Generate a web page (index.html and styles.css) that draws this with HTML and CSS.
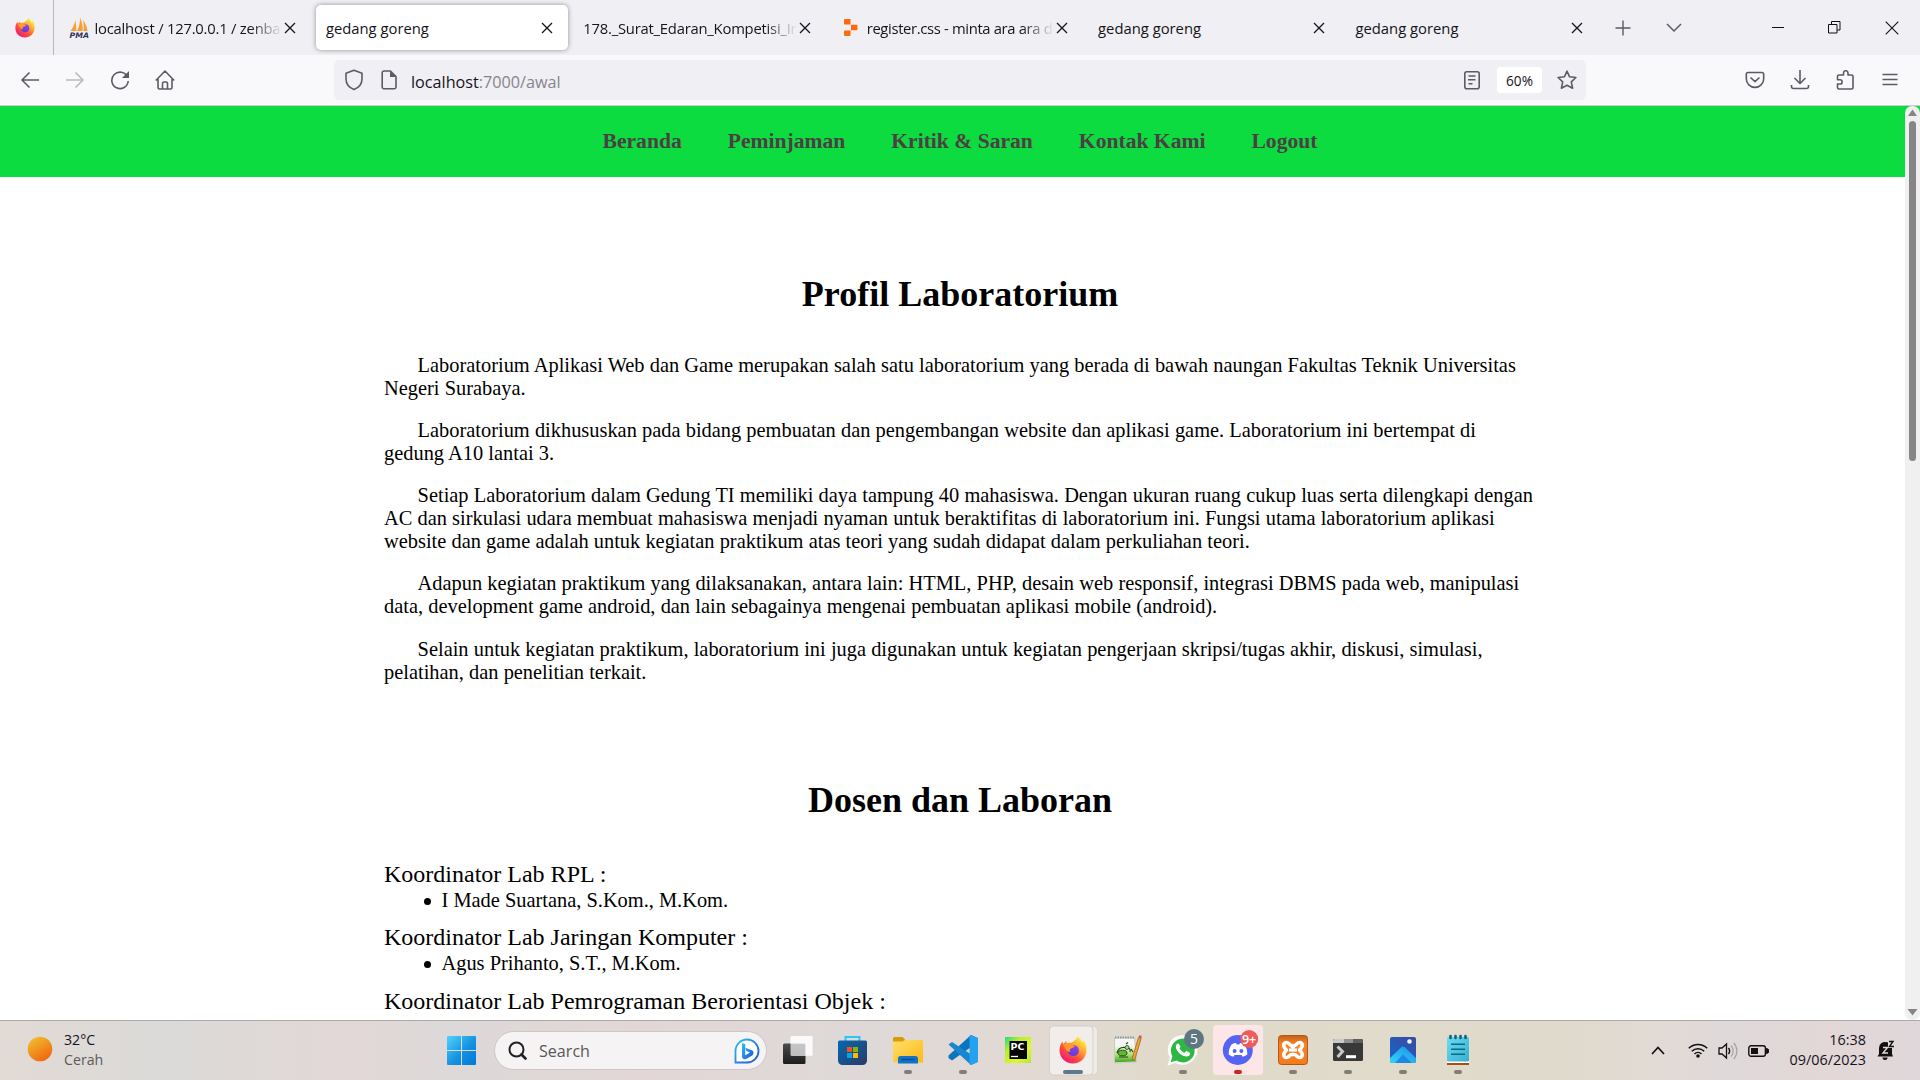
FILE: index.html
```html
<!DOCTYPE html>
<html lang="id">
<head>
<meta charset="utf-8">
<title>gedang goreng</title>
<link rel="stylesheet" href="styles.css">
</head>
<body>
<svg class="defs" width="0" height="0" aria-hidden="true">
  <defs>
    <linearGradient id="fxBody" x1="0.85" y1="0.1" x2="0.2" y2="0.95"><stop offset="0" stop-color="#fff04a"/><stop offset=".3" stop-color="#ffb02e"/><stop offset=".6" stop-color="#ff5a35"/><stop offset="1" stop-color="#f0127a"/></linearGradient>
    <linearGradient id="fxCore" x1="0.8" y1="0" x2="0.3" y2="1"><stop offset="0" stop-color="#9a3df0"/><stop offset="1" stop-color="#5a3fd0"/></linearGradient>
    <linearGradient id="sun" x1="0.2" y1="0" x2="0.8" y2="1"><stop offset="0" stop-color="#efc02c"/><stop offset=".5" stop-color="#f0901f"/><stop offset="1" stop-color="#f06010"/></linearGradient>
    <linearGradient id="win" gradientUnits="userSpaceOnUse" x1="0" y1="0" x2="29" y2="29"><stop offset="0" stop-color="#4fd3ff"/><stop offset=".55" stop-color="#1591e2"/><stop offset="1" stop-color="#0078d8"/></linearGradient>
    <linearGradient id="bing" x1="0" y1="0" x2="1" y2="1"><stop offset="0" stop-color="#1fc4f4"/><stop offset=".5" stop-color="#2a86ea"/><stop offset="1" stop-color="#2350cf"/></linearGradient>
    <linearGradient id="store" x1="0" y1="0" x2="1" y2="1"><stop offset="0" stop-color="#0668b4"/><stop offset="1" stop-color="#2a3a63"/></linearGradient>
    <linearGradient id="folder" x1="0" y1="0" x2="1" y2="1"><stop offset="0" stop-color="#ffdf6a"/><stop offset="1" stop-color="#ffb915"/></linearGradient>
    <linearGradient id="pyc" x1="0" y1="0" x2="1" y2="1"><stop offset="0" stop-color="#1fd88a"/><stop offset=".3" stop-color="#b8ee2c"/><stop offset=".7" stop-color="#e0f52a"/><stop offset="1" stop-color="#a8ea3a"/></linearGradient>
    <linearGradient id="dark" x1="0" y1="0" x2="0" y2="1"><stop offset="0" stop-color="#4a4a4a"/><stop offset="1" stop-color="#1d1d1d"/></linearGradient>
    <linearGradient id="photoSky" x1="0" y1="1" x2="1" y2="0"><stop offset="0" stop-color="#1566c8"/><stop offset="1" stop-color="#3b4aa0"/></linearGradient>
    <linearGradient id="photoHill" x1="0" y1="1" x2="1" y2="0"><stop offset="0" stop-color="#35d4fb"/><stop offset="1" stop-color="#1b8ee8"/></linearGradient>
    <linearGradient id="note" x1="0" y1="0" x2="1" y2="1"><stop offset="0" stop-color="#6bdcf2"/><stop offset="1" stop-color="#37aed2"/></linearGradient>
    <linearGradient id="npGreen" x1="0" y1="0" x2="0" y2="1"><stop offset="0" stop-color="#f4f7f0"/><stop offset=".5" stop-color="#b5e283"/><stop offset="1" stop-color="#3fa51c"/></linearGradient>
    <linearGradient id="xampp" x1="0" y1="0" x2="0" y2="1"><stop offset="0" stop-color="#c4611c"/><stop offset=".3" stop-color="#f98426"/><stop offset="1" stop-color="#f27a1f"/></linearGradient>
    <symbol id="firefox" viewBox="0 0 28 29">
      <path d="M19 1c1 2 3 3.500 4.500 6l1-2c2 3 3 6 3 10 0 7.700-6 13.500-13.500 13.500S.5 22.500.5 15.500C.5 11 2 8.500 3.500 6.500L4 9l3.500-3v2.500c1.500-.8 3-.9 4.500-.7C14 7 17 5 19 1z" fill="url(#fxBody)"/>
      <circle cx="14.300" cy="15.500" r="5.600" fill="url(#fxCore)"/>
      <path d="M4 10c2-1.500 5-1.800 7.500-.8 1.500.7 3 1.500 4.500 1.800-1 1.800-3 2-4.500 2.700-1 .6-.9 2-.2 3.300-2.500 0-3.800-1.500-5-3.500z" fill="#ff9a2a"/>
    </symbol>
    <symbol id="close" viewBox="0 0 12 12"><path d="M1 1l10 10M11 1L1 11" fill="none" stroke="#15141a" stroke-width="1.300"/></symbol>
  </defs>
</svg>

<header class="tabstrip">
  <div class="pinned"><svg width="20" height="21"><use href="#firefox"/></svg></div>
  <div class="tab">
    <svg class="favicon" width="22" height="24" viewBox="0 0 22 24"><path d="M1.500 15C4 12 5.500 8 6.500 4l1 11zM8 15C10.500 11 11 6 11 1.500c2 4 3 9 2.700 13.500zM14.300 15c.7-3 .5-7-.3-11 2.500 3 4 7 4.500 11z" fill="#f6a036"/><text x="0.500" y="21.500" class="pma" textLength="19.500" lengthAdjust="spacingAndGlyphs">PMA</text></svg>
    <span class="title fade snug">localhost / 127.0.0.1 / zenbase</span><svg class="x" width="12" height="12"><use href="#close"/></svg>
  </div>
  <div class="tab active"><span class="title">gedang goreng</span><svg class="x" width="12" height="12"><use href="#close"/></svg></div>
  <div class="tab"><span class="title fade snug">178._Surat_Edaran_Kompetisi_Inovasi</span><svg class="x" width="12" height="12"><use href="#close"/></svg></div>
  <div class="tab">
    <svg class="favicon replit" width="14" height="17" viewBox="0 0 14 17"><path d="M1 0h5.500v5.500H1a1 1 0 0 1-1-1V1a1 1 0 0 1 1-1zM7 5.700h5.500a1 1 0 0 1 1 1v3.500a1 1 0 0 1-1 1H7zM1 11.500h5.500v4.500a1 1 0 0 1-1 1H1a1 1 0 0 1-1-1v-3.500a1 1 0 0 1 1-1z" fill="#fc6a0c"/></svg>
    <span class="title fade tight">register.css - minta ara ara dong</span><svg class="x" width="12" height="12"><use href="#close"/></svg>
  </div>
  <div class="tab"><span class="title">gedang goreng</span><svg class="x" width="12" height="12"><use href="#close"/></svg></div>
  <div class="tab"><span class="title">gedang goreng</span><svg class="x" width="12" height="12"><use href="#close"/></svg></div>
  <div class="strip-tools">
    <svg width="16" height="16" viewBox="0 0 16 16"><path d="M8 .5v15M.5 8h15" stroke="#5b5b66" stroke-width="1.400"/></svg>
    <svg width="16" height="10" viewBox="0 0 16 10"><path d="M1 1l7 7 7-7" fill="none" stroke="#5b5b66" stroke-width="1.500"/></svg>
  </div>
  <div class="win-buttons">
    <svg width="12" height="12" viewBox="0 0 12 12"><path d="M0 5.500h12" stroke="#111" stroke-width="1"/></svg>
    <svg width="13" height="13" viewBox="0 0 13 13"><path d="M.5 3.500h8.500v8.500H.5zM3.500 3.500v-3h8.500v8.500h-3" fill="none" stroke="#111"/></svg>
    <svg width="14" height="14" viewBox="0 0 14 14"><path d="M.7.700l12.600 12.600M13.300.700L.7 13.300" stroke="#111" stroke-width="1.100"/></svg>
  </div>
</header>

<div class="toolbar">
  <div class="nav-buttons">
    <svg width="20" height="20" viewBox="0 0 20 20"><path d="M19 10H2M9.500 2.500L2 10l7.500 7.500" class="ln"/></svg>
    <svg class="dim" width="20" height="20" viewBox="0 0 20 20"><path d="M1 10h17M10.500 2.500L18 10l-7.500 7.500" class="ln"/></svg>
    <svg width="20" height="20" viewBox="0 0 20 20"><path d="M17.500 7A8.200 8.200 0 1 0 18.200 11" class="ln"/><path d="M19 1v7h-7z" fill="#5b5b66"/></svg>
    <svg width="20" height="20" viewBox="0 0 20 20"><path d="M.8 10.500L10 1l9.200 9.500M3 9v8.500a1.500 1.500 0 0 0 1.500 1.500h11a1.500 1.500 0 0 0 1.500-1.500V9M7.500 19v-5.500a1.500 1.500 0 0 1 1.500-1.500h2a1.500 1.500 0 0 1 1.500 1.500V19" class="ln"/></svg>
  </div>
  <div class="urlbar">
    <svg width="20" height="22" viewBox="0 0 20 22"><path d="M10 1.300l8 3v5.500c0 5-3.500 9-8 10.800-4.500-1.800-8-5.800-8-10.800V4.300z" class="ln"/></svg>
    <svg class="doc" width="16" height="20" viewBox="0 0 16 20"><path d="M3 1h6.500L15 6.500V17a1.700 1.700 0 0 1-1.700 1.700H3A1.700 1.700 0 0 1 1.200 17V2.700A1.700 1.700 0 0 1 3 1z" class="ln"/><path d="M9 1v6h6z" fill="#5b5b66"/></svg>
    <span class="url">localhost<span class="path">:7000/awal</span></span>
    <svg class="reader" width="16" height="19" viewBox="0 0 16 19"><rect x=".8" y=".8" width="14.400" height="17" rx="2" class="ln"/><path d="M4.500 5h7M4 8.800h7.500M4.500 12.800h4" class="ln"/></svg>
    <span class="zoom">60%</span>
    <svg width="20" height="20" viewBox="0 0 20 20"><path d="M10 1.200l2.600 5.600 6.300.7-4.600 4.300 1.300 6.400L10 15.200l-5.600 3 1.300-6.400L1.100 7.500l6.300-.7z" class="ln"/></svg>
  </div>
  <div class="ext-buttons">
    <svg width="20" height="20" viewBox="0 0 20 20"><path d="M3 2.500h14a1.700 1.700 0 0 1 1.700 1.700v4.500a8.700 8.700 0 0 1-17.400 0V4.200A1.700 1.700 0 0 1 3 2.500zM5.500 7.500l4.500 4.200 4.500-4.200" class="ln"/></svg>
    <svg width="20" height="20" viewBox="0 0 20 20"><path d="M10 0v13.500M4.500 8l5.500 5.500L15.500 8M1.500 15v1.500a2 2 0 0 0 2 2h13a2 2 0 0 0 2-2V15" class="ln"/></svg>
    <svg width="20" height="20" viewBox="0 0 20 20"><path d="M2.500 6.500a1.500 1.500 0 0 1 1.500-1.500H8.500V3a2 2 0 0 1 4.500 0v2H16.500a1.500 1.500 0 0 1 1.500 1.500v11A1.500 1.500 0 0 1 16.500 19H4A1.500 1.500 0 0 1 2.500 17.500v-3.500h2.500a2 2 0 0 0 0-4.200H2.500z" class="ln"/></svg>
    <svg width="20" height="20" viewBox="0 0 20 20"><path d="M2.500 4.500h15M2.500 9.500h15M2.500 14.500h15" class="ln"/></svg>
  </div>
</div>

<main class="viewport">
  <nav class="menu">
    <a>Beranda</a><a>Peminjaman</a><a>Kritik &amp; Saran</a><a>Kontak Kami</a><a>Logout</a>
  </nav>
  <section class="profile">
    <h1>Profil Laboratorium</h1>
    <p>Laboratorium Aplikasi Web dan Game merupakan salah satu laboratorium yang berada di bawah naungan Fakultas Teknik Universitas Negeri Surabaya.</p>
    <p>Laboratorium dikhususkan pada bidang pembuatan dan pengembangan website dan aplikasi game. Laboratorium ini bertempat di gedung A10 lantai 3.</p>
    <p>Setiap Laboratorium dalam Gedung TI memiliki daya tampung 40 mahasiswa. Dengan ukuran ruang cukup luas serta dilengkapi dengan AC dan sirkulasi udara membuat mahasiswa menjadi nyaman untuk beraktifitas di laboratorium ini. Fungsi utama laboratorium aplikasi website dan game adalah untuk kegiatan praktikum atas teori yang sudah didapat dalam perkuliahan teori.</p>
    <p>Adapun kegiatan praktikum yang dilaksanakan, antara lain: HTML, PHP, desain web responsif, integrasi DBMS pada web, manipulasi data, development game android, dan lain sebagainya mengenai pembuatan aplikasi mobile (android).</p>
    <p>Selain untuk kegiatan praktikum, laboratorium ini juga digunakan untuk kegiatan pengerjaan skripsi/tugas akhir, diskusi, simulasi, pelatihan, dan penelitian terkait.</p>
  </section>
  <section class="staff">
    <h1>Dosen dan Laboran</h1>
    <div class="role">Koordinator Lab RPL :</div>
    <ul><li>I Made Suartana, S.Kom., M.Kom.</li></ul>
    <div class="role">Koordinator Lab Jaringan Komputer :</div>
    <ul><li>Agus Prihanto, S.T., M.Kom.</li></ul>
    <div class="role">Koordinator Lab Pemrograman Berorientasi Objek :</div>
  </section>
  <div class="scrollbar">
    <svg width="15" height="15" viewBox="0 0 15 15"><path d="M7.500 3.500l4.500 6.500H3z" fill="#858585"/></svg>
    <div class="thumb"></div>
    <svg class="down" width="15" height="15" viewBox="0 0 15 15"><path d="M2.500 4h10l-5 6.500z" fill="#858585"/></svg>
  </div>
</main>

<footer class="taskbar">
  <div class="weather">
    <svg width="26" height="26" viewBox="0 0 26 26"><circle cx="13" cy="13" r="12.300" fill="url(#sun)"/></svg>
    <div class="lines"><span>32°C</span><span class="muted">Cerah</span></div>
  </div>
  <svg class="start" width="29" height="29" viewBox="0 0 29 29"><path d="M1 0h13v14H0V1a1 1 0 0 1 1-1zM15 0h13a1 1 0 0 1 1 1v13H15zM0 15h14v14H1a1 1 0 0 1-1-1zM15 15h14v13a1 1 0 0 1-1 1H15z" fill="url(#win)"/></svg>
  <div class="search">
    <svg width="19" height="20" viewBox="0 0 19 20"><circle cx="8.500" cy="8.500" r="7" fill="none" stroke="#222" stroke-width="2"/><path d="M13.500 13.500l4 4" stroke="#222" stroke-width="2.600" stroke-linecap="round"/></svg>
    <span>Search</span>
    <svg width="26" height="26" viewBox="0 0 26 26"><path d="M1.500 24.500V13A11.500 11.500 0 1 1 13 24.500z" fill="#fff" stroke="url(#bing)" stroke-width="1.800"/><path d="M8 5l3.200 1.200v11L16 14.500l-3.500-1.600-1.300-3.200L18 12.200c2 1 2 4 .2 5.300L12 21c-1.800.8-4-.3-4-2.500z" fill="url(#bing)"/></svg>
  </div>
  <div class="apps">
    <div class="app"><svg viewBox="0 0 55 60"><rect x="13" y="23.500" width="22.500" height="20.500" rx="1.500" fill="url(#dark)"/><rect x="20.500" y="16" width="22" height="20" rx="1.500" fill="#f7f7f7" opacity=".72"/><path d="M22 16h20.500v19.500h-7V23.500h-15V17.500a1.500 1.500 0 0 1 1.500-1.500z" fill="#fff" opacity=".7"/></svg></div>
    <div class="app"><svg viewBox="0 0 55 60"><path d="M20.500 22v-5h14v5" fill="none" stroke="#2bc5f7" stroke-width="2"/><path d="M13 22a1.500 1.500 0 0 1 1.500-1.500h26A1.500 1.500 0 0 1 42 22v18.500a4.500 4.500 0 0 1-4.500 4.500h-20a4.500 4.500 0 0 1-4.500-4.500z" fill="url(#store)"/><path d="M22 27h5v5h-5z" fill="#f25022"/><path d="M28 27h5v5h-5z" fill="#7fba00"/><path d="M22 33h5v5h-5z" fill="#00a4ef"/><path d="M28 33h5v5h-5z" fill="#ffb900"/></svg></div>
    <div class="app run"><svg viewBox="0 0 55 60"><path d="M13 18.500a1.500 1.500 0 0 1 1.500-1.500h8l3 3-2 3.500H13z" fill="#d99a08"/><path d="M13 21.500h9.500l2.500-1.500h16.500a1.500 1.500 0 0 1 1.500 1.500v21H14.500a1.500 1.500 0 0 1-1.500-1.500z" fill="url(#folder)"/><path d="M18 43.500V38.500a2.500 2.500 0 0 1 2.500-2.500h15a2.500 2.500 0 0 1 2.500 2.500v5z" fill="#1173c4"/><path d="M21.500 39.500h13" stroke="#0a4c90" stroke-width="1.400"/></svg></div>
    <div class="app run"><svg viewBox="0 0 55 60"><path d="M36 15l6.500 3v4.500L17 40.500l-3.500-2.500v-2.500z" fill="#0a74bd"/><path d="M13.500 24.500L17 22l25.500 16.500V42L36 45z" fill="#1a86cf"/><path d="M36 15l7 3v24l-7 3-1.500-.7V15.700z" fill="#24a2ef"/></svg></div>
    <div class="app"><svg viewBox="0 0 55 60"><rect x="15" y="17" width="26" height="26" fill="url(#pyc)"/><rect x="19.500" y="21" width="17.500" height="18" fill="#050505"/><text x="20.500" y="30" class="pc">PC</text><path d="M21 36.500h7" stroke="#fff" stroke-width="1.300"/></svg></div>
    <div class="app run current"><svg viewBox="0 0 55 60"><rect x="8" y="6.500" width="44.500" height="48" rx="4" fill="#efece8" stroke="#d5d1cb" stroke-width=".8"/><rect x="4.500" y="6" width="43.500" height="49" rx="4" fill="#f0edeb" stroke="#cfcac5" stroke-width=".8"/><svg x="14" y="15" width="28" height="29"><use href="#firefox"/></svg></svg></div>
    <div class="app"><svg viewBox="0 0 55 60"><path d="M14.500 18h20l2 24-22 1z" fill="#f6f7f4" stroke="#b9bdb4" stroke-width=".7"/><path d="M15 17.500h19" stroke="#8b9a9f" stroke-width="1.800" stroke-dasharray="1.500 1"/><path d="M15 26h20l1 15.500-21 .8z" fill="url(#npGreen)"/><path d="M17 33c1-4 4-6 8-5.500 4-.5 6 2 5 4.500M19 37h9M26 24l2-1.500M31 29l2 3" fill="none" stroke="#24451c" stroke-width="1.200"/><ellipse cx="22.500" cy="33" rx="4.500" ry="2.800" fill="#5fbb2a" stroke="#1f3d18" stroke-width=".9"/><circle cx="27" cy="27.500" r="2" fill="#a8dd80" stroke="#1f3d18" stroke-width=".8"/><path d="M38.500 17.500l2.700.8-6 20-2.500 2.500-.2-3.500z" fill="#f3a32f" stroke="#915a1b" stroke-width=".7"/><path d="M38.700 17l.6-1.700 2.400.8-.5 2.200z" fill="#cf4f55"/></svg></div>
    <div class="app run"><svg viewBox="0 0 55 60"><path d="M12.500 45.500l2.300-8A14.800 14.800 0 1 1 20.500 43z" fill="#fff"/><path d="M15.700 42.300l1.700-6A11.900 11.900 0 1 1 21.500 40.600z" fill="#2db843"/><path d="M23.500 23.500c-1-.3-2 .6-2.500 2-.7 3 2 7 5 9 2.500 1.800 6 2.800 8 1.200 1.200-1 1.300-2.500 1-3l-3.500-1.700c-.8-.1-1.200 1.500-2 1.700-2-.5-4.500-3-5-4.500.3-.7 1-1 1-1.700z" fill="#fff"/><circle cx="39" cy="19" r="10" fill="#5e7681"/><text x="39" y="24.200" text-anchor="middle" class="badge">5</text></svg></div>
    <div class="app run alert"><svg viewBox="0 0 55 60"><rect x="3" y="5" width="50" height="50" rx="4" fill="#fde6e8"/><circle cx="27.800" cy="30" r="15" fill="#5664f2"/><path d="M21.500 24.500c2-1 3.500-1.300 4.500-1.400l.7 1.400h2.600l.7-1.400c1.500.1 3 .5 4.500 1.400 2 3 3 6.500 2.800 10-1.600 1.200-3.200 2-4.800 2.300l-1-1.800h-7l-1 1.800c-1.600-.3-3.200-1.100-4.800-2.300-.2-3.500.8-7 2.800-10z" fill="#fff"/><circle cx="24.600" cy="31" r="2" fill="#5664f2"/><circle cx="31.400" cy="31" r="2" fill="#5664f2"/><circle cx="39.200" cy="19" r="9" fill="#ef5a5a"/><text x="39.100" y="23.500" text-anchor="middle" class="badge small">9+</text></svg></div>
    <div class="app run"><svg viewBox="0 0 55 60"><rect x="13.500" y="15.500" width="29" height="29" rx="3" fill="url(#xampp)" stroke="#b4560f"/><path d="M23 23c-3-1.500-5 1-4 3.500.5 1.500 1.500 2.500 2.500 3.500-1 1-2 2-2.500 3.500-1 2.500 1 5 4 3.500 1.500-.8 2-2.500 3.500-2.500h3c1.500 0 2 1.700 3.500 2.500 3 1.500 5-1 4-3.500-.5-1.500-1.500-2.500-2.500-3.500 1-1 2-2 2.500-3.500 1-2.500-1-5-4-3.500-1.500.8-2 2.500-3.500 2.500l-1.500 2-1.500-2c-1.500 0-2-1.700-3.500-2.500z" fill="none" stroke="#fff" stroke-width="3.600" stroke-linejoin="round"/><path d="M24 30h8" stroke="#fff" stroke-width="3.200"/></svg></div>
    <div class="app run"><svg viewBox="0 0 55 60"><rect x="13" y="19" width="30" height="22" rx="1.500" fill="#383838"/><path d="M14.500 19H24v4H13v-2.500a1.500 1.500 0 0 1 1.500-1.500z" fill="#c9c9c9"/><path d="M24 19h9v4h-9z" fill="#929292"/><path d="M33 19h8.500a1.500 1.500 0 0 1 1.500 1.500V23H33z" fill="#5f5f5f"/><path d="M17.500 26.500l5 5-5 5.500" fill="none" stroke="#c8c8c8" stroke-width="3"/><path d="M26 36.700h10" stroke="#fff" stroke-width="3"/></svg></div>
    <div class="app run"><svg viewBox="0 0 55 60"><rect x="15" y="17" width="26" height="26" rx="2" fill="url(#photoSky)"/><path d="M15 38l11-10.500q2-1.800 4 0L41 38v3a2 2 0 0 1-2 2H17a2 2 0 0 1-2-2z" fill="url(#photoHill)"/><path d="M20 43l8-8.500 9 8.500z" fill="#1a7be0" opacity=".8"/><circle cx="34.500" cy="21.500" r="2.300" fill="#f2f6ff"/></svg></div>
    <div class="app run"><svg viewBox="0 0 55 60"><path d="M17 40.500h22v4.500H17z" fill="#a5500e"/><path d="M17 41h22v2H17z" fill="#fff"/><rect x="17" y="17" width="22" height="24.500" rx="1.500" fill="url(#note)"/><path d="M21 24.200h14M21 29.200h14M21 34.200h14" stroke="#0a6b85" stroke-width="1.600"/><path d="M20.500 16v2M25.500 16v2M30.500 16v2M35.500 16v2" stroke="#12617a" stroke-width="2.600" stroke-linecap="round"/></svg></div>
  </div>
  <div class="tray">
    <svg width="14" height="9" viewBox="0 0 14 9"><path d="M1 8l6-6.500L13 8" fill="none" stroke="#111" stroke-width="1.700"/></svg>
    <svg class="wifi" width="20" height="16" viewBox="0 0 20 16"><path d="M.8 6.300a13 13 0 0 1 18.400 0M3.800 9.300a9 9 0 0 1 12.400 0M6.500 12a5 5 0 0 1 7 0" fill="none" stroke="#111" stroke-width="1.500"/><circle cx="10" cy="14" r="1.800" fill="#111"/></svg>
    <svg class="vol" width="20" height="18" viewBox="0 0 20 18"><path d="M1 6h3l4.500-4v14L4 12H1z" fill="none" stroke="#111" stroke-width="1.300"/><path d="M10.500 6a5 5 0 0 1 0 6" fill="none" stroke="#111" stroke-width="1.400"/><path d="M13 3.500a8 8 0 0 1 0 11M15.800 1a12 12 0 0 1 0 16" fill="none" stroke="#a9a4a2" stroke-width="1.200"/></svg>
    <svg class="bat" width="21" height="12" viewBox="0 0 21 12"><rect x=".8" y=".8" width="16.600" height="10.400" rx="2.200" fill="none" stroke="#111" stroke-width="1.400"/><rect x="3" y="3" width="7" height="6" fill="#111"/><path d="M18.300 3.500a2.300 2.300 0 0 1 0 5z" fill="#111" stroke="#111"/></svg>
    <div class="clock"><span>16:38</span><span>09/06/2023</span></div>
    <svg class="bell" width="18" height="21" viewBox="0 0 18 21"><path d="M2 14V8a6 6 0 0 1 8-5.700h5V14l1 2.500H.5z" fill="#111"/><path d="M5.500 17.500h5a2.500 2.500 0 0 1-5 0z" fill="#111"/><path d="M11 0h7v8h-7z" fill="#e2d8d7"/><path d="M6 7.500h4.500L6 13h5" fill="none" stroke="#e2d8d7" stroke-width="1.400"/><path d="M12 1.500h4L12.500 6.500h4.500" fill="none" stroke="#111" stroke-width="1.400"/></svg>
  </div>
</footer>
</body>
</html>
```
FILE: styles.css
```css
* { box-sizing: border-box; }

body {
  margin: 0;
  width: 1920px;
  height: 1080px;
  display: flex;
  flex-direction: column;
  overflow: hidden;
  background: #fff;
  font-family: "Open Sans", "Noto Sans", sans-serif;
  color: #15141a;
}

svg { display: block; flex: none; }
.defs { position: absolute; }

/* Tab strip */
.tabstrip {
  height: 55px;
  flex: none;
  display: flex;
  background: #f0eff4;
}
.pinned {
  width: 54px;
  flex: none;
  padding: 17px 0 0 15px;
  border-right: 1px solid #b9b8be;
}
.tab {
  width: 252.400px;
  height: 45px;
  margin: 5px 2.500px 0;
  flex: none;
  display: flex;
  align-items: center;
  padding: 0 15px 0 10px;
  border-radius: 5px;
  font-size: 14.800px;
}
.pinned + .tab { margin-left: 4.500px; }
.tab.active { background: #fff; box-shadow: 0 0 5px rgba(0, 0, 0, .4); }
.favicon { margin-right: 4px; }
.replit { margin: 0 9px 0 3px; }
.title { flex: 1; min-width: 0; overflow: hidden; white-space: nowrap; line-height: 24px; padding-top: 1px; }
.fade { -webkit-mask-image: linear-gradient(to left, transparent, #000 32px); mask-image: linear-gradient(to left, transparent, #000 32px); }
.snug { letter-spacing: -.22px; }
.tight { letter-spacing: -.34px; }
.x { margin-left: 2px; }
.pma { font: italic bold 7.500px "DejaVu Sans", sans-serif; fill: #30335f; }
.strip-tools { display: flex; align-items: center; gap: 35px; margin-left: 15px; }
.win-buttons { display: flex; align-items: center; gap: 44px; margin-left: auto; padding-right: 21px; }

/* Navigation toolbar */
.toolbar {
  height: 51px;
  flex: none;
  display: flex;
  align-items: center;
  background: #f9f9fb;
  border-bottom: 1px solid #ccccd2;
}
.ln { fill: none; stroke: #5b5b66; stroke-width: 1.600; stroke-linejoin: round; }
.dim { opacity: .4; }
.nav-buttons { width: 334px; display: flex; gap: 25px; padding-left: 20px; }
.urlbar {
  width: 1252px;
  height: 40px;
  display: flex;
  align-items: center;
  padding: 0 9px 0 10px;
  background: #f0eff4;
  border-radius: 5px;
}
.doc { margin: 0 14px 0 17px; }
.url { flex: 1; font-size: 16.200px; padding-top: 3px; }
.path { color: #85848c; }
.zoom {
  width: 45px;
  height: 26px;
  margin: 0 15px 0 17px;
  border-radius: 4px;
  background: #fff;
  font-size: 13.600px;
  line-height: 27px;
  text-align: center;
}
.ext-buttons { display: flex; gap: 25px; margin-left: auto; padding-right: 20px; }

/* Page */
.viewport {
  position: relative;
  height: 914px;
  flex: none;
  overflow: hidden;
  background: #fff;
  color: #000;
  font-family: "Liberation Serif", "Times New Roman", serif;
}
.menu {
  height: 71px;
  display: flex;
  justify-content: center;
  align-items: center;
  gap: 46px;
  background: #0ddc40;
  color: #4b3f42;
  font-size: 21.600px;
  font-weight: bold;
  line-height: 25px;
}
section { width: 1152px; margin: 0 auto; }
h1 { margin: 0 0 39.200px; font-size: 36px; line-height: 41px; text-align: center; }
.profile { padding-top: 97px; }
.staff { padding-top: 96.600px; }
.staff h1 { margin-bottom: 39.400px; }
p { margin: 0 0 19.100px; font-size: 20.400px; line-height: 23px; text-indent: 33.600px; word-spacing: .080px; }
p:last-child { margin-bottom: 0; }
.role { font-size: 24px; line-height: 27px; }
ul { margin: 1.400px 0 12.100px; padding: 0; list-style: none; }
li { display: flex; align-items: center; font-size: 20.400px; line-height: 23px; }
li::before { content: ""; width: 7px; height: 7px; margin: 2px 10.500px 0 40px; border-radius: 50%; background: #000; }

.scrollbar {
  position: absolute;
  top: 0;
  right: 0;
  width: 15px;
  height: 914px;
  display: flex;
  flex-direction: column;
  align-items: center;
  background: #f0f0f0;
  border-radius: 7px;
}
.thumb { width: 7px; height: 340px; border-radius: 4px; background: #868686; }
.down { margin-top: auto; }

/* Taskbar */
.taskbar {
  position: relative;
  height: 60px;
  flex: none;
  display: flex;
  align-items: center;
  border-top: 1px solid #aeaaa9;
  background: linear-gradient(90deg, #e2dad5 0, #dbdad8 160px, #e2d8d7 350px, #dcd9d8 450px, #e2d7d6 640px, #ded9d8 860px, #e2d9d4 1010px, #e0dac9 1200px, #e1dbcc 1420px, #dfdacb 1540px, #e2dad3 1640px, #dfd9da 1730px, #e3d7d7 1830px, #dfd7da 1920px);
}
.weather { width: 447px; display: flex; align-items: center; padding-left: 27px; gap: 11px; font-size: 14.200px; }
.lines, .clock { display: flex; flex-direction: column; line-height: 20px; margin-top: -2px; }
.weather svg { margin-top: -3px; }
.muted { color: #5d5a59; }
.search {
  width: 273px;
  height: 39px;
  margin: 0 2.500px 0 18px;
  display: flex;
  align-items: center;
  padding: 0 6px 0 13px;
  border: 1px solid #cdc6c5;
  border-radius: 20px;
  background: #f5f3f3;
  color: #5a5858;
  font-size: 16.100px;
}
.search span { flex: 1; padding-left: 12px; }
.apps { display: flex; height: 60px; margin-top: -1px; }
.app { position: relative; width: 55px; height: 60px; }
.app svg { width: 55px; height: 60px; }
.app svg svg { width: 28px; height: 29px; }
.run::after {
  content: "";
  position: absolute;
  left: 24px;
  top: 50px;
  width: 8px;
  height: 4px;
  border-radius: 2px;
  background: #837d78;
}
.current::after { left: 18px; width: 20px; background: #607988; }
.alert::after { background: #c42b1c; }
.pc { font: bold 9.500px "DejaVu Sans", sans-serif; fill: #fff; }
.badge { font-size: 14px; fill: #fff; }
.badge.small { font-size: 12.500px; font-weight: 600; }
.tray { display: flex; align-items: center; margin-left: auto; padding-right: 25px; }
.wifi { margin: -2px 0 0 23px; }
.vol { margin-left: 10px; }
.bat { margin-left: 10px; }
.clock { width: 97px; text-align: right; font-size: 14.400px; }
.bell { margin-left: 11px; }
```
